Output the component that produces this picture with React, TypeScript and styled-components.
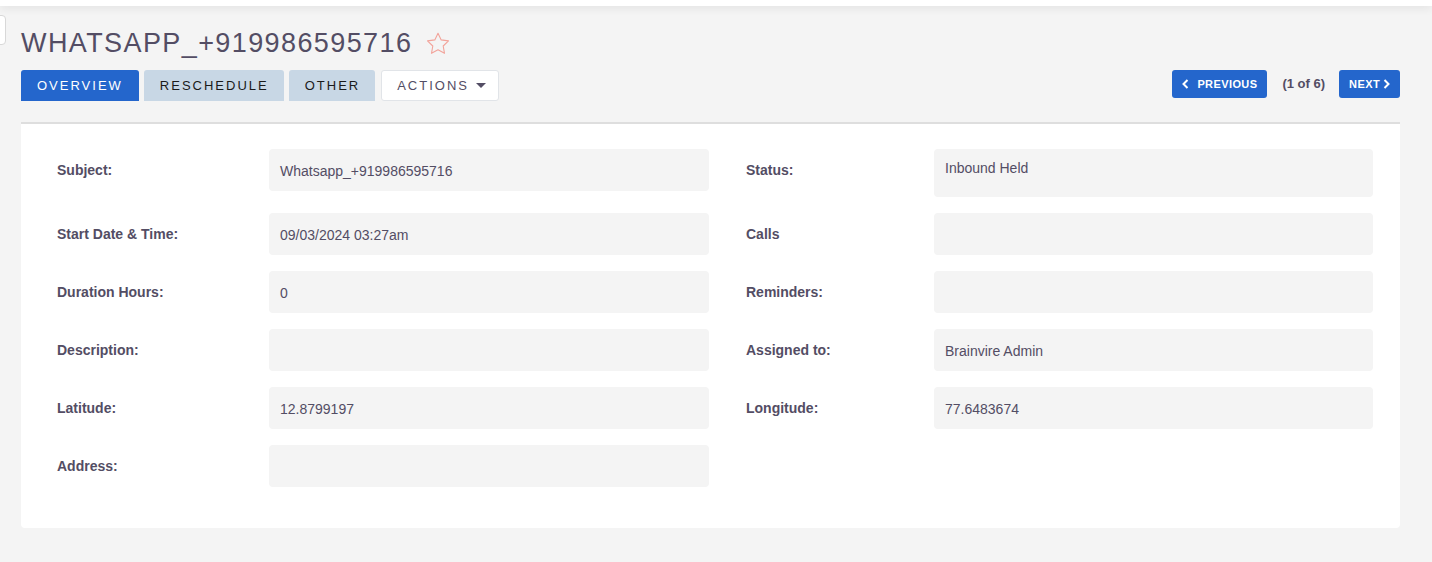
import React from "react";
import styled, { createGlobalStyle } from "styled-components";

const Global = createGlobalStyle`
  html, body { margin: 0; padding: 0; background: #f4f4f4; }
  body { font-family: "Liberation Sans", Arial, sans-serif; color: #534d64; }
  * { box-sizing: border-box; }
`;

const Page = styled.div`
  position: relative;
  min-height: 562px;
  background: #f4f4f4;
`;

const TopBar = styled.div`
  height: 6px;
  background: #fff;
  box-shadow: 0 2px 8px rgba(0, 0, 0, 0.09);
`;

const SideToggle = styled.div`
  position: absolute;
  left: -4px;
  top: 15px;
  width: 10px;
  height: 30px;
  background: #fff;
  border: 1px solid #d8d8d8;
  border-radius: 0 4px 4px 0;
`;

const Main = styled.main`
  padding: 20px 32px 0 21px;
`;

const TitleRow = styled.div`
  display: flex;
  align-items: center;
  gap: 14px;
  height: 34px;
`;

const Title = styled.h1`
  margin: 0;
  font-family: "Liberation Sans", Arial, sans-serif;
  font-weight: 400;
  font-size: 27px;
  line-height: 34px;
  letter-spacing: 1.4px;
  color: #534d64;
`;

const ToolRow = styled.div`
  display: flex;
  justify-content: space-between;
  align-items: flex-start;
  margin-top: 10px;
`;

const Tabs = styled.div`
  display: flex;
  gap: 5px;
`;

const Tab = styled.button<{ $variant: "active" | "muted" | "menu" }>`
  height: 31px;
  padding: ${(p) =>
    p.$variant === "menu" ? "0 12px 0 15px" : p.$variant === "muted" ? "0 15px 0 16px" : "0 16px"};
  margin-left: ${(p) => (p.$variant === "menu" ? "1px" : "0")};
  font-family: "Liberation Sans", Arial, sans-serif;
  font-size: 13px;
  letter-spacing: 2px;
  display: flex;
  align-items: center;
  gap: 7px;
  cursor: pointer;
  border: ${(p) => (p.$variant === "menu" ? "1px solid #e1e4e8" : "none")};
  border-radius: ${(p) => (p.$variant === "menu" ? "3px" : "3px 3px 0 0")};
  background: ${(p) =>
    p.$variant === "active" ? "#2466cc" : p.$variant === "muted" ? "#c8d7e5" : "#fff"};
  color: ${(p) =>
    p.$variant === "active" ? "#fff" : p.$variant === "muted" ? "#1a1a1a" : "#534d64"};
`;

const Caret = styled.span`
  width: 0;
  height: 0;
  border-left: 5px solid transparent;
  border-right: 5px solid transparent;
  border-top: 5px solid #534d64;
`;

const Pager = styled.div`
  display: flex;
  align-items: center;
`;

const PageButton = styled.button<{ $gap: number }>`
  height: 28px;
  padding: 0 10px;
  border: none;
  border-radius: 3px;
  background: #2466cc;
  color: #fff;
  font-family: "Liberation Sans", Arial, sans-serif;
  font-weight: 700;
  font-size: 11px;
  letter-spacing: 0.4px;
  display: flex;
  align-items: center;
  gap: ${(p) => p.$gap}px;
  cursor: pointer;
`;

const PageCount = styled.span`
  font-weight: 700;
  font-size: 13px;
  color: #534d64;
  margin: 0 14px 0 15px;
  line-height: 28px;
`;

const Panel = styled.section`
  margin-top: 21px;
  background: #fff;
  border-top: 2px solid #dedede;
  border-radius: 0 0 4px 4px;
  padding: 25px 27px 41px 36px;
  display: flex;
  flex-direction: column;
  gap: 16px;
`;

const Row = styled.div`
  display: flex;
  align-items: flex-start;
  gap: 37px;
`;

const Field = styled.div<{ $labelWidth: number; $valueWidth: number }>`
  display: grid;
  grid-template-columns: ${(p) => `${p.$labelWidth}px ${p.$valueWidth}px`};
  align-items: start;
`;

const Label = styled.div`
  font-weight: 700;
  font-size: 14px;
  line-height: 18px;
  padding-top: 12px;
  color: #534d64;
`;

const Value = styled.div<{ $tall?: boolean }>`
  background: #f4f4f4;
  border-radius: 4px;
  min-height: ${(p) => (p.$tall ? "48px" : "42px")};
  padding: ${(p) => (p.$tall ? "10px 11px" : "13px 11px 11px")};
  font-size: 14px;
  line-height: 18px;
  color: #534d64;
`;

const Star = () => (
  <svg width="24" height="23" viewBox="0 0 24 23" aria-hidden="true">
    <path
      d="M12 1.2l3.2 6.7 7.3 1-5.3 5.1 1.3 7.3L12 17.8l-6.5 3.5 1.3-7.3L1.5 8.9l7.3-1z"
      fill="none"
      stroke="#f2a39a"
      strokeWidth="1.1"
      strokeLinejoin="round"
    />
  </svg>
);

const ChevronLeft = () => (
  <svg width="7" height="10" viewBox="0 0 7 10" aria-hidden="true">
    <path d="M5.5 1L1.5 5l4 4" fill="none" stroke="#fff" strokeWidth="2" />
  </svg>
);

const ChevronRight = () => (
  <svg width="7" height="10" viewBox="0 0 7 10" aria-hidden="true">
    <path d="M1.5 1l4 4-4 4" fill="none" stroke="#fff" strokeWidth="2" />
  </svg>
);

type F = { label: string; value: string; tall?: boolean };

const rows: [F, F | null][] = [
  [{ label: "Subject:", value: "Whatsapp_+919986595716" }, { label: "Status:", value: "Inbound Held", tall: true }],
  [{ label: "Start Date & Time:", value: "09/03/2024 03:27am" }, { label: "Calls", value: "" }],
  [{ label: "Duration Hours:", value: "0" }, { label: "Reminders:", value: "" }],
  [{ label: "Description:", value: "" }, { label: "Assigned to:", value: "Brainvire Admin" }],
  [{ label: "Latitude:", value: "12.8799197" }, { label: "Longitude:", value: "77.6483674" }],
  [{ label: "Address:", value: "" }, null],
];

export default function App() {
  return (
    <Page>
      <Global />
      <TopBar />
      <SideToggle />
      <Main>
        <TitleRow>
          <Title>WHATSAPP_+919986595716</Title>
          <Star />
        </TitleRow>
        <ToolRow>
          <Tabs>
            <Tab $variant="active">OVERVIEW</Tab>
            <Tab $variant="muted">RESCHEDULE</Tab>
            <Tab $variant="muted">OTHER</Tab>
            <Tab $variant="menu">
              ACTIONS
              <Caret />
            </Tab>
          </Tabs>
          <Pager>
            <PageButton $gap={8}>
              <ChevronLeft />
              PREVIOUS
            </PageButton>
            <PageCount>(1 of 6)</PageCount>
            <PageButton $gap={3}>
              NEXT
              <ChevronRight />
            </PageButton>
          </Pager>
        </ToolRow>
        <Panel>
          {rows.map(([l, r], i) => (
            <Row key={i}>
              <Field $labelWidth={212} $valueWidth={440}>
                <Label>{l.label}</Label>
                <Value $tall={l.tall}>{l.value}</Value>
              </Field>
              {r && (
                <Field $labelWidth={188} $valueWidth={439}>
                  <Label>{r.label}</Label>
                  <Value $tall={r.tall}>{r.value}</Value>
                </Field>
              )}
            </Row>
          ))}
        </Panel>
      </Main>
    </Page>
  );
}
